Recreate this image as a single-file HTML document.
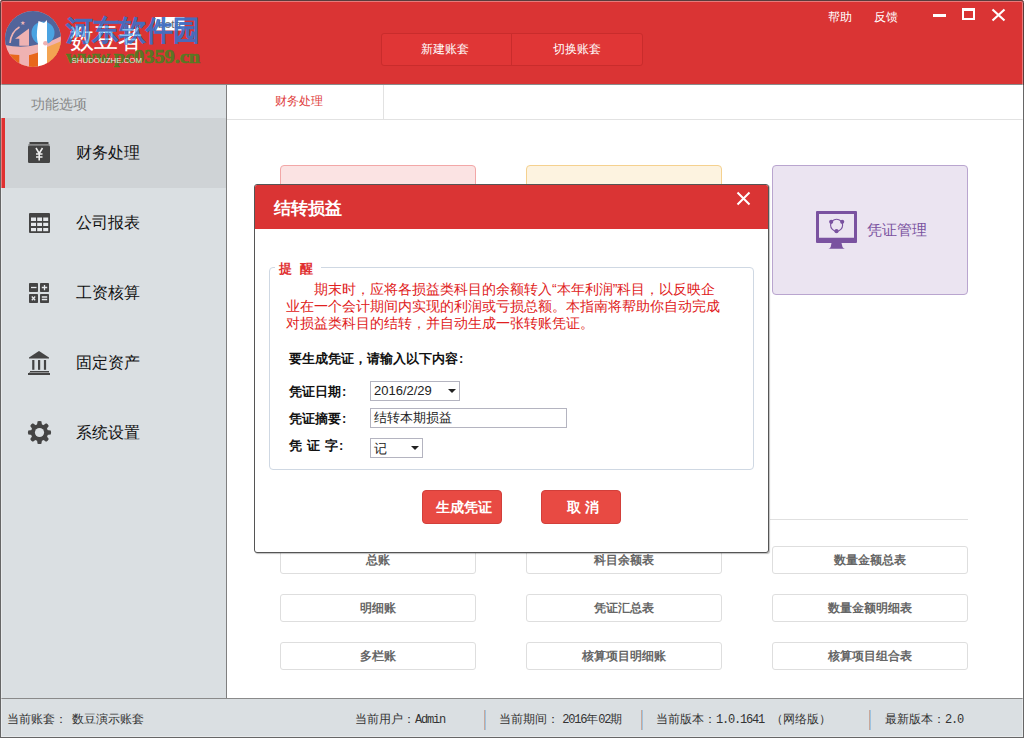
<!DOCTYPE html>
<html><head><meta charset="utf-8">
<style>
*{box-sizing:border-box;margin:0;padding:0}
html,body{width:1024px;height:738px;overflow:hidden;background:#fff;font-family:"Liberation Sans",sans-serif}
.abs{position:absolute}
#hdr{position:absolute;left:0;top:0;width:1024px;height:85px;background:#da3434;border-bottom:1px solid #8a8a8a;border-radius:3px 3px 0 0}
.hbtn{position:absolute;top:33px;height:33px;background:#e03636;color:#fff;font-size:12px;line-height:31px;text-align:center;border:1px solid #c92c2c;padding-right:3px}
#side{position:absolute;left:0;top:85px;width:227px;height:613px;background:#dadfe2;border-right:1px solid #7f7f7f}
.sitem{position:absolute;left:0;width:226px;height:70px;font-size:16px;color:#111}
.sitem .t{position:absolute;left:76px;top:26px;line-height:18px}
.sitem svg{position:absolute;left:0;top:0}
#tabbar{position:absolute;left:227px;top:85px;width:797px;height:35px;border-bottom:1px solid #e2e2e2;background:#fff}
.card{position:absolute;top:165px;width:196px;height:130px;border-radius:4px}
.rbtn{position:absolute;width:196px;height:28px;border:1px solid #dedede;border-radius:3px;font-size:12px;color:#666;text-align:center;line-height:26px;font-weight:bold;background:#fff}
#status{position:absolute;left:0;top:698px;width:1024px;height:40px;background:#dadfe2;border-top:1px solid #8a8a8a;font-size:12px;color:#333}
#status span{position:absolute;top:13px;line-height:14px;white-space:nowrap}
.mono{font-family:"Liberation Mono",monospace;letter-spacing:-1.2px}
.sep{position:absolute;top:11px;width:2px;height:20px;background:linear-gradient(90deg,#c9a89a 50%,#9ec3e0 50%)}
#dlg{position:absolute;left:254px;top:184px;width:515px;height:369px;background:#fff;border:1px solid #555;border-radius:3px;box-shadow:1px 1px 1px rgba(0,0,0,.25)}
#dhdr{position:absolute;left:0;top:0;width:513px;height:44px;background:#da3434;border-radius:2px 2px 0 0}
.lbl{position:absolute;left:34px;font-size:13px;font-weight:bold;color:#111;line-height:14px;white-space:nowrap}
.inp{position:absolute;left:115px;height:20px;border:1px solid #b4b4c0;background:#fff;font-size:13px;color:#222;line-height:18px;padding-left:3px;white-space:nowrap}
.caret{position:absolute;top:7px;width:0;height:0;border-left:4px solid transparent;border-right:4px solid transparent;border-top:4px solid #222}
.dbtn{position:absolute;top:305px;width:80px;height:34px;background:#e84a43;border-radius:4px;color:#fff;font-size:14px;font-weight:bold;text-align:center;line-height:33px;border:1px solid #d23f3a}
#frame{position:absolute;left:0;top:0;width:1024px;height:738px;border:1px solid #666;border-top-color:#5a3c3c;border-radius:3px 3px 0 0;box-shadow:inset 0 0 0 1px rgba(255,255,255,.35);pointer-events:none}
</style></head><body>
 <div id="hdr">
  <svg class="abs" style="left:0;top:0" width="220" height="84" viewBox="0 0 220 84">
   <defs><clipPath id="cc"><circle cx="33" cy="39" r="28"/></clipPath></defs>
   <g clip-path="url(#cc)">
    <rect x="0" y="0" width="70" height="80" fill="#efb2b2"/>
    <path d="M0 0 H70 V31 Q52 42 40 44 Q22 49 5 45 L0 44Z" fill="#52649a"/>
    <path d="M0 53 Q18 56 30 55 Q48 50 70 38 V80 H0Z" fill="#e8671c"/>
    <path d="M47 47 Q58 43 70 37 V80 H47Z" fill="#f3a452"/>
    <rect x="19.3" y="54" width="9.7" height="20" fill="#efb2b2"/>
    <rect x="38" y="50" width="9" height="22" fill="#fff"/>
    <circle cx="43" cy="33" r="11.5" fill="#4aa3e2"/>
    <path d="M37.5 27 L38.5 21 L44 23 L47 20 L47 60 L38 60 L38 44 Q36 36 37.5 27Z" fill="#fff"/>
    <path d="M15 38.7 L29 28.6 L29 45.8 L19.3 45.8 L19.3 38.7Z" fill="#efb2b2"/>
    <path d="M10 43 Q11 32 19.5 27" stroke="#efb2b2" stroke-width="1.6" fill="none"/>
    <circle cx="45.4" cy="43.3" r="2.3" fill="#efb2b2"/>
   </g>
   <text x="19.5" y="25" font-size="6" fill="#f0b8b8">★</text>
   <text x="69.5" y="48" font-size="28" fill="#fff" style="font-weight:300" textLength="72" lengthAdjust="spacingAndGlyphs">数豆者</text>
   <rect x="155" y="17" width="29.5" height="13.5" fill="#fff"/>
   <text x="158" y="28" font-size="11" fill="#666" textLength="23" lengthAdjust="spacingAndGlyphs">beta</text>
   
   <text x="65.5" y="40" font-size="28" fill="#3f6fc4" fill-opacity=".8" stroke="#3f6fc4" stroke-opacity=".8" stroke-width=".5" font-family="Liberation Serif" font-weight="bold" textLength="134" lengthAdjust="spacingAndGlyphs">河东软件园</text><defs><clipPath id="wmc"><text x="65.5" y="40" font-size="28" font-family="Liberation Serif" font-weight="bold" textLength="134" lengthAdjust="spacingAndGlyphs">河东软件园</text></clipPath></defs><text x="69.5" y="48" font-size="28" fill="#7cc0f2" style="font-weight:300" textLength="72" lengthAdjust="spacingAndGlyphs" clip-path="url(#wmc)">数豆者</text>
   <text x="66" y="63" font-size="18" fill="#4e7f22" fill-opacity=".9" stroke="#4e7f22" stroke-width=".6" font-family="Liberation Serif" font-weight="bold" textLength="134" lengthAdjust="spacingAndGlyphs">www.pc0359.cn</text><text x="71.5" y="62.5" font-size="7" fill="#fff" fill-opacity=".85" textLength="70.5" lengthAdjust="spacingAndGlyphs">SHUDOUZHE.COM</text>
  </svg>
  <div class="hbtn" style="left:381px;width:131px;border-radius:3px 0 0 3px">新建账套</div>
  <div class="hbtn" style="left:511px;width:132px;border-radius:0 3px 3px 0;padding-right:1px">切换账套</div>
  <div class="abs" style="left:828px;top:9px;color:#fff;font-size:12px">帮助</div>
  <div class="abs" style="left:874px;top:9px;color:#fff;font-size:12px">反馈</div>
  <div class="abs" style="left:933px;top:14px;width:13px;height:3px;background:#fff"></div>
  <div class="abs" style="left:962px;top:8px;width:13px;height:12px;border:2px solid #fff;border-top-width:3px"></div>
  <svg class="abs" style="left:991px;top:8px" width="15" height="14" viewBox="0 0 15 14"><path d="M1.5 1.5 L13.5 12.5 M13.5 1.5 L1.5 12.5" stroke="#fff" stroke-width="2.2"/></svg>
 </div>
 <div id="side">
  <div class="abs" style="left:31px;top:11px;font-size:14px;color:#888">功能选项</div>
  <div class="sitem" style="top:33px;background:#cfd3d6">
   <div class="abs" style="left:1px;top:0;width:4px;height:70px;background:#e03030"></div>
   <svg width="60" height="70"><rect x="29.5" y="57" width="0" height="0"/><rect x="29.5" y="24" width="19" height="2" fill="#444"/><rect x="28.5" y="26" width="21" height="1.5" fill="#888"/><rect x="28" y="27.5" width="22" height="17.5" rx="1.2" fill="#444"/><path d="M36 30 L39.2 35.5 L42.5 30 M39.2 35.5 V42.5 M36 36 H42.5 M36 39 H42.5" stroke="#eee" stroke-width="1.6" fill="none"/></svg>
   <div class="t">财务处理</div></div>
  <div class="sitem" style="top:103px">
   <svg width="60" height="70"><rect x="29" y="25" width="21" height="20" rx="1" fill="#444"/><g fill="#e6e9ec"><rect x="31" y="29.5" width="5" height="3.5"/><rect x="37.2" y="29.5" width="4.8" height="3.5"/><rect x="43.2" y="29.5" width="5" height="3.5"/><rect x="31" y="34.8" width="5" height="3.2"/><rect x="37.2" y="34.8" width="4.8" height="3.2"/><rect x="43.2" y="34.8" width="5" height="3.2"/><rect x="31" y="40" width="5" height="3.2"/><rect x="37.2" y="40" width="4.8" height="3.2"/><rect x="43.2" y="40" width="5" height="3.2"/></g></svg>
   <div class="t">公司报表</div></div>
  <div class="sitem" style="top:173px">
   <svg width="60" height="70"><g fill="#444"><rect x="29" y="25" width="9" height="9" rx=".8"/><rect x="40" y="25" width="9" height="9" rx=".8"/><rect x="29" y="36" width="9" height="9" rx=".8"/><rect x="40" y="36" width="9" height="9" rx=".8"/></g><g stroke="#e6e9ec" stroke-width="1.3" fill="none"><path d="M31 29.5 H36.5"/><path d="M41.8 29.5 H47.2 M44.5 27 V32.2"/><path d="M31.8 38.5 L35.2 42.2 M35.2 38.5 L31.8 42.2"/><path d="M41.8 39 H47.2 M41.8 41.5 H47.2"/></g></svg>
   <div class="t">工资核算</div></div>
  <div class="sitem" style="top:243px">
   <svg width="60" height="70"><g fill="#444"><path d="M39 23 L49 29.5 V30.5 H29 V29.5Z"/><rect x="32.2" y="32" width="2.2" height="9.8"/><rect x="38" y="32" width="2.2" height="9.8"/><rect x="43.9" y="32" width="2.2" height="9.8"/><rect x="30" y="43" width="19" height="1.2"/><rect x="28" y="45" width="22" height="2"/></g><rect x="29" y="44.2" width="20" height=".8" fill="#888"/></svg>
   <div class="t">固定资产</div></div>
  <div class="sitem" style="top:313px">
   <svg width="60" height="70"><g transform="translate(39.5 34.5)"><g fill="#444"><circle r="8.6"/><path d="M-2.6 -7 L-1.9 -11.2 Q0 -12 1.9 -11.2 L2.6 -7Z" transform="rotate(0)"/><path d="M-2.6 -7 L-1.9 -11.2 Q0 -12 1.9 -11.2 L2.6 -7Z" transform="rotate(45)"/><path d="M-2.6 -7 L-1.9 -11.2 Q0 -12 1.9 -11.2 L2.6 -7Z" transform="rotate(90)"/><path d="M-2.6 -7 L-1.9 -11.2 Q0 -12 1.9 -11.2 L2.6 -7Z" transform="rotate(135)"/><path d="M-2.6 -7 L-1.9 -11.2 Q0 -12 1.9 -11.2 L2.6 -7Z" transform="rotate(180)"/><path d="M-2.6 -7 L-1.9 -11.2 Q0 -12 1.9 -11.2 L2.6 -7Z" transform="rotate(225)"/><path d="M-2.6 -7 L-1.9 -11.2 Q0 -12 1.9 -11.2 L2.6 -7Z" transform="rotate(270)"/><path d="M-2.6 -7 L-1.9 -11.2 Q0 -12 1.9 -11.2 L2.6 -7Z" transform="rotate(315)"/></g><circle r="4.6" fill="#dadfe2"/></g></svg>
   <div class="t">系统设置</div></div>
 </div>
 <div id="tabbar">
  <div class="abs" style="left:0;top:0;width:157px;height:34px;border-right:1px solid #e2e2e2;color:#e04040;font-size:12px;padding-left:48px;line-height:33px">财务处理</div>
 </div>
 <div class="card" style="left:280px;background:#fbe3e3;border:1px solid #f2a7a7"></div>
 <div class="card" style="left:526px;background:#fdf3e0;border:1px solid #f5d18f"></div>
 <div class="card" style="left:772px;background:#ebe4f1;border:1px solid #b9a5cf">
  <svg class="abs" style="left:43px;top:45px" width="44" height="40" viewBox="0 0 44 40"><path d="M1 0 H40 Q41 0 41 1 V31 Q41 32 40 32 H1 Q0 32 0 31 V1 Q0 0 1 0Z M3 3 V26.8 H38 V3Z" fill="#7a52a0" fill-rule="evenodd"/><path d="M15.5 32 H25.5 L26.5 36 Q27.5 37.8 29 37.8 H12.4 Q13.9 37.8 14.7 36Z" fill="#7a52a0"/><circle cx="20.6" cy="14.2" r="6" stroke="#7a52a0" stroke-width="1.1" fill="none"/><circle cx="15.2" cy="10.8" r="2.1" fill="#7a52a0"/><circle cx="26.2" cy="10.8" r="2.1" fill="#7a52a0"/><circle cx="20.5" cy="20.2" r="2.1" fill="#7a52a0"/></svg>
  <div class="abs" style="left:94px;top:55px;font-size:15px;color:#7a52a0;line-height:18px;white-space:nowrap">凭证管理</div>
 </div>
 <div class="abs" style="left:770px;top:519px;width:198px;height:1px;background:#e0e0e0"></div>
 <div class="rbtn" style="left:280px;top:546px">总账</div>
 <div class="rbtn" style="left:526px;top:546px">科目余额表</div>
 <div class="rbtn" style="left:772px;top:546px">数量金额总表</div>
 <div class="rbtn" style="left:280px;top:594px">明细账</div>
 <div class="rbtn" style="left:526px;top:594px">凭证汇总表</div>
 <div class="rbtn" style="left:772px;top:594px">数量金额明细表</div>
 <div class="rbtn" style="left:280px;top:642px">多栏账</div>
 <div class="rbtn" style="left:526px;top:642px">核算项目明细账</div>
 <div class="rbtn" style="left:772px;top:642px">核算项目组合表</div>
 <div id="status">
  <span style="left:7px">当前账套：<span style="position:static;margin-left:5px">数豆演示账套</span></span>
  <span style="left:355px">当前用户：<span class="mono" style="position:static">Admin</span></span>
  <div class="sep" style="left:484px"></div>
  <span style="left:499px">当前期间：&nbsp;<span class="mono" style="position:static">2016</span>年<span class="mono" style="position:static">02</span>期</span>
  <div class="sep" style="left:641px"></div>
  <span style="left:656px">当前版本：<span class="mono" style="position:static">1.0.1641</span>&nbsp;&nbsp;（网络版）</span>
  <div class="sep" style="left:869px"></div>
  <span style="left:885px">最新版本：<span class="mono" style="position:static">2.0</span></span>
 </div>
 <div id="dlg">
  <div id="dhdr">
   <div class="abs" style="left:19px;top:15px;color:#fff;font-size:17px;font-weight:bold;line-height:18px">结转损益</div>
   <svg class="abs" style="left:481px;top:6px" width="15" height="15" viewBox="0 0 15 15"><path d="M1.5 1.5 L13.5 13.5 M13.5 1.5 L1.5 13.5" stroke="#fff" stroke-width="2"/></svg>
  </div>
  <div class="abs" style="left:14px;top:82px;width:485px;height:203px;border:1px solid #cfd8e3;border-radius:4px"></div>
  <div class="abs" style="left:20px;top:77px;padding:0 0 0 4px;background:#fff;color:#e03030;font-size:13px;font-weight:bold;line-height:14px;letter-spacing:8px">提醒</div>
  <div class="abs" style="left:31px;top:96px;width:440px;color:#e02020;font-size:14px;line-height:17px;text-indent:28px">期末时，应将各损益类科目的余额转入“本年利润”科目，以反映企业在一个会计期间内实现的利润或亏损总额。本指南将帮助你自动完成对损益类科目的结转，并自动生成一张转账凭证。</div>
  <div class="lbl" style="top:167px">要生成凭证，请输入以下内容<b style="margin-left:1px">:</b></div>
  <div class="lbl" style="top:200px">凭证日期<b style="margin-left:1px">:</b></div>
  <div class="lbl" style="top:227px">凭证摘要<b style="margin-left:1px">:</b></div>
  <div class="lbl" style="top:254px;letter-spacing:5px">凭证字<b style="letter-spacing:0;margin-left:-4px">:</b></div>
  <div class="inp" style="top:196px;width:90px">2016/2/29<div class="caret" style="left:77px"></div></div>
  <div class="inp" style="top:223px;width:197px">结转本期损益</div>
  <div class="inp" style="top:253px;width:53px;line-height:20px">记<div class="caret" style="left:40px"></div></div>
  <div class="dbtn" style="left:167px;padding-left:4px">生成凭证</div>
  <div class="dbtn" style="left:286px;letter-spacing:4px;padding-left:8px">取消</div>
 </div>
 <div id="frame"></div>
 <div class="abs" style="left:0;top:3px;width:1px;height:82px;background:#5a3c3c"></div><div class="abs" style="left:1023px;top:3px;width:1px;height:82px;background:#5a3c3c"></div>
</body></html>
